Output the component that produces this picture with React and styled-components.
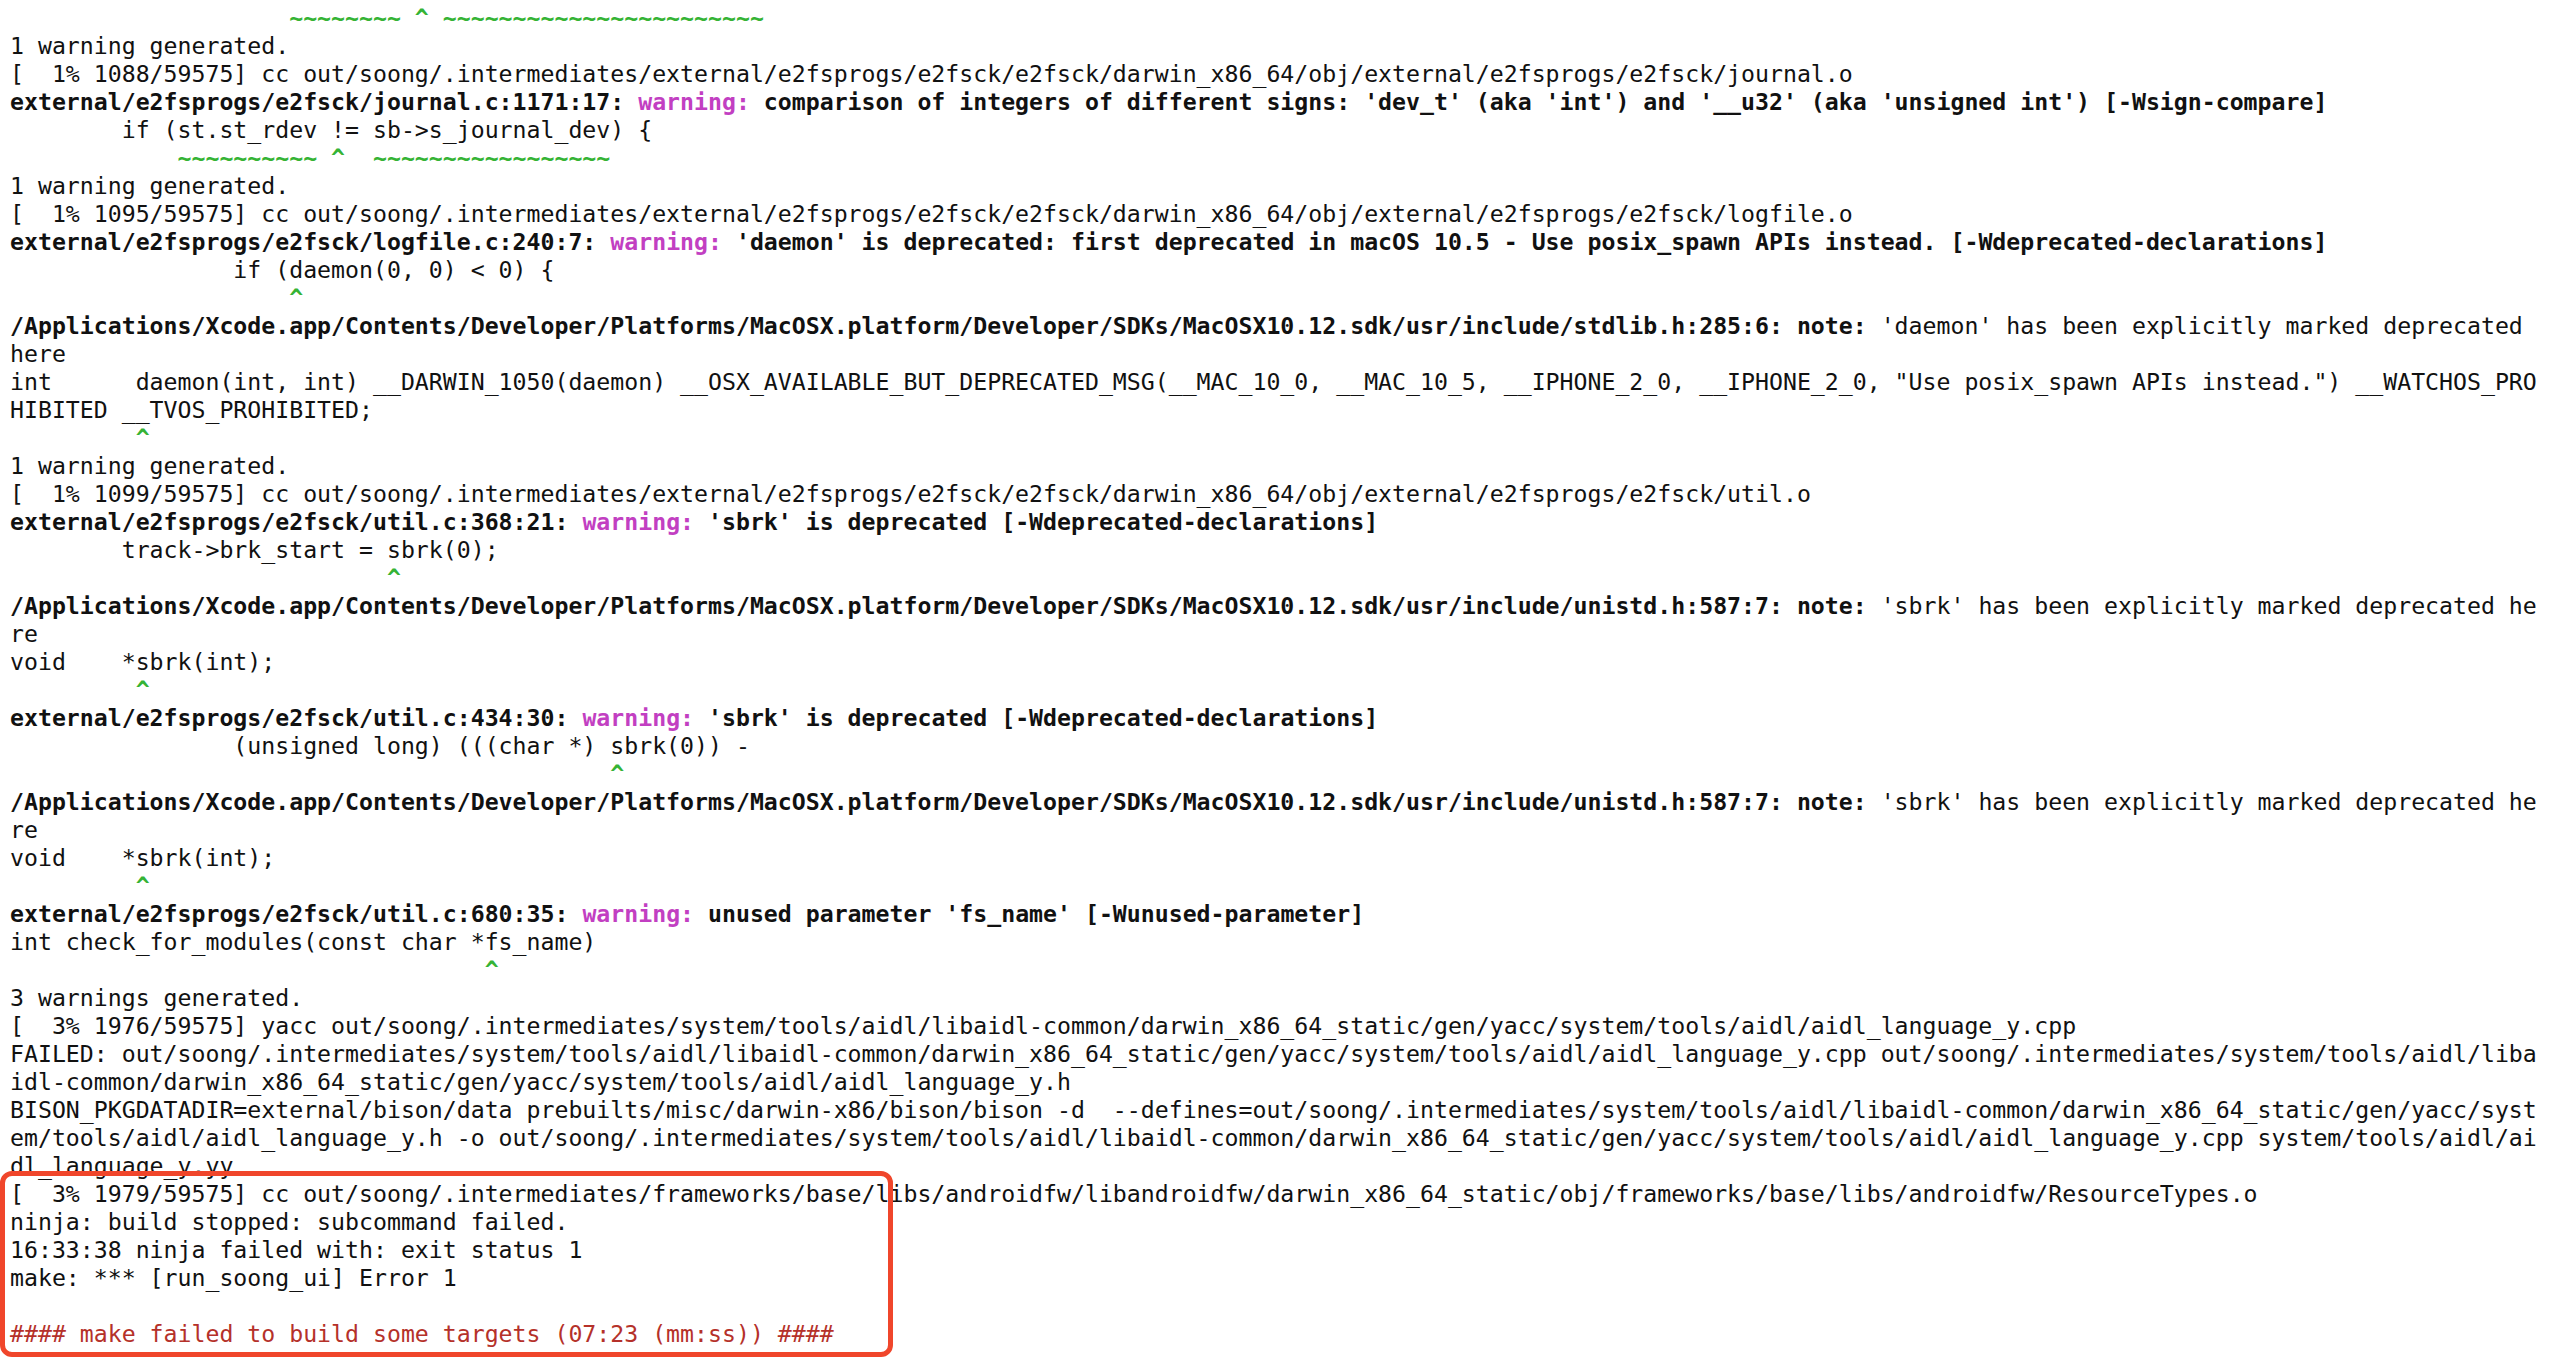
import React from 'react';
import styled, { createGlobalStyle } from 'styled-components';

const GlobalStyle = createGlobalStyle`
  html, body {
    margin: 0;
    padding: 0;
    background: #ffffff;
  }
`;

const Terminal = styled.div`
  padding: 4px 0 14px 10px;
  min-height: 1362px;
  box-sizing: border-box;
  font-family: "DejaVu Sans Mono", "Liberation Mono", monospace;
  font-size: 23.2px;
  color: #111;
  background: #fff;
`;

const Line = styled.div`
  height: 28px;
  line-height: 28px;
  white-space: pre;
`;

const Seg = styled.span`
  font-weight: ${(p) => (p.$bold ? 700 : 400)};
  color: ${(p) => p.$color || 'inherit'};
`;

// red annotation frame drawn over the tail of the log
const Highlight = styled.div`
  position: relative;

  &::after {
    content: '';
    position: absolute;
    left: -10px;
    top: -9px;
    height: calc(100% + 18px);
    width: 893px;
    box-sizing: border-box;
    border: 5px solid #f0462b;
    border-radius: 12px;
    pointer-events: none;
  }
`;

const kinds = {
  n: {},
  b: { $bold: true },
  w: { $bold: true, $color: '#c23fc2' },
  g: { $bold: true, $color: '#35b335' },
  r: { $color: '#b5312a' },
};

const sbrkNote = [
  ['b', '/Applications/Xcode.app/Contents/Developer/Platforms/MacOSX.platform/Developer/SDKs/MacOSX10.12.sdk/usr/include/unistd.h:587:7: note: '],
  ['n', "'sbrk' has been explicitly marked deprecated he"],
];

const rows = [
  [['g', '                    ~~~~~~~~ ^ ~~~~~~~~~~~~~~~~~~~~~~~']],
  [['n', '1 warning generated.']],
  [['n', '[  1% 1088/59575] cc out/soong/.intermediates/external/e2fsprogs/e2fsck/e2fsck/darwin_x86_64/obj/external/e2fsprogs/e2fsck/journal.o']],
  [
    ['b', 'external/e2fsprogs/e2fsck/journal.c:1171:17: '],
    ['w', 'warning: '],
    ['b', "comparison of integers of different signs: 'dev_t' (aka 'int') and '__u32' (aka 'unsigned int') [-Wsign-compare]"],
  ],
  [['n', '        if (st.st_rdev != sb->s_journal_dev) {']],
  [['g', '            ~~~~~~~~~~ ^  ~~~~~~~~~~~~~~~~~']],
  [['n', '1 warning generated.']],
  [['n', '[  1% 1095/59575] cc out/soong/.intermediates/external/e2fsprogs/e2fsck/e2fsck/darwin_x86_64/obj/external/e2fsprogs/e2fsck/logfile.o']],
  [
    ['b', 'external/e2fsprogs/e2fsck/logfile.c:240:7: '],
    ['w', 'warning: '],
    ['b', "'daemon' is deprecated: first deprecated in macOS 10.5 - Use posix_spawn APIs instead. [-Wdeprecated-declarations]"],
  ],
  [['n', '                if (daemon(0, 0) < 0) {']],
  [['g', '                    ^']],
  [
    ['b', '/Applications/Xcode.app/Contents/Developer/Platforms/MacOSX.platform/Developer/SDKs/MacOSX10.12.sdk/usr/include/stdlib.h:285:6: note: '],
    ['n', "'daemon' has been explicitly marked deprecated"],
  ],
  [['n', 'here']],
  [['n', 'int      daemon(int, int) __DARWIN_1050(daemon) __OSX_AVAILABLE_BUT_DEPRECATED_MSG(__MAC_10_0, __MAC_10_5, __IPHONE_2_0, __IPHONE_2_0, "Use posix_spawn APIs instead.") __WATCHOS_PRO']],
  [['n', 'HIBITED __TVOS_PROHIBITED;']],
  [['g', '         ^']],
  [['n', '1 warning generated.']],
  [['n', '[  1% 1099/59575] cc out/soong/.intermediates/external/e2fsprogs/e2fsck/e2fsck/darwin_x86_64/obj/external/e2fsprogs/e2fsck/util.o']],
  [
    ['b', 'external/e2fsprogs/e2fsck/util.c:368:21: '],
    ['w', 'warning: '],
    ['b', "'sbrk' is deprecated [-Wdeprecated-declarations]"],
  ],
  [['n', '        track->brk_start = sbrk(0);']],
  [['g', '                           ^']],
  sbrkNote,
  [['n', 're']],
  [['n', 'void    *sbrk(int);']],
  [['g', '         ^']],
  [
    ['b', 'external/e2fsprogs/e2fsck/util.c:434:30: '],
    ['w', 'warning: '],
    ['b', "'sbrk' is deprecated [-Wdeprecated-declarations]"],
  ],
  [['n', '                (unsigned long) (((char *) sbrk(0)) -']],
  [['g', '                                           ^']],
  sbrkNote,
  [['n', 're']],
  [['n', 'void    *sbrk(int);']],
  [['g', '         ^']],
  [
    ['b', 'external/e2fsprogs/e2fsck/util.c:680:35: '],
    ['w', 'warning: '],
    ['b', "unused parameter 'fs_name' [-Wunused-parameter]"],
  ],
  [['n', 'int check_for_modules(const char *fs_name)']],
  [['g', '                                  ^']],
  [['n', '3 warnings generated.']],
  [['n', '[  3% 1976/59575] yacc out/soong/.intermediates/system/tools/aidl/libaidl-common/darwin_x86_64_static/gen/yacc/system/tools/aidl/aidl_language_y.cpp']],
  [['n', 'FAILED: out/soong/.intermediates/system/tools/aidl/libaidl-common/darwin_x86_64_static/gen/yacc/system/tools/aidl/aidl_language_y.cpp out/soong/.intermediates/system/tools/aidl/liba']],
  [['n', 'idl-common/darwin_x86_64_static/gen/yacc/system/tools/aidl/aidl_language_y.h']],
  [['n', 'BISON_PKGDATADIR=external/bison/data prebuilts/misc/darwin-x86/bison/bison -d  --defines=out/soong/.intermediates/system/tools/aidl/libaidl-common/darwin_x86_64_static/gen/yacc/syst']],
  [['n', 'em/tools/aidl/aidl_language_y.h -o out/soong/.intermediates/system/tools/aidl/libaidl-common/darwin_x86_64_static/gen/yacc/system/tools/aidl/aidl_language_y.cpp system/tools/aidl/ai']],
  [['n', 'dl_language_y.yy']],
];

const tail = [
  [['n', '[  3% 1979/59575] cc out/soong/.intermediates/frameworks/base/libs/androidfw/libandroidfw/darwin_x86_64_static/obj/frameworks/base/libs/androidfw/ResourceTypes.o']],
  [['n', 'ninja: build stopped: subcommand failed.']],
  [['n', '16:33:38 ninja failed with: exit status 1']],
  [['n', 'make: *** [run_soong_ui] Error 1']],
  [],
  [['r', '#### make failed to build some targets (07:23 (mm:ss)) ####']],
];

const LogLine = ({ segs }) => (
  <Line>
    {segs.length === 0 ? ' ' : segs.map(([kind, text], i) => (
      <Seg key={i} {...kinds[kind]}>{text}</Seg>
    ))}
  </Line>
);

const App = () => (
  <>
    <GlobalStyle />
    <Terminal>
      {rows.map((segs, i) => <LogLine key={i} segs={segs} />)}
      <Highlight>
        {tail.map((segs, i) => <LogLine key={i} segs={segs} />)}
      </Highlight>
    </Terminal>
  </>
);

export default App;
